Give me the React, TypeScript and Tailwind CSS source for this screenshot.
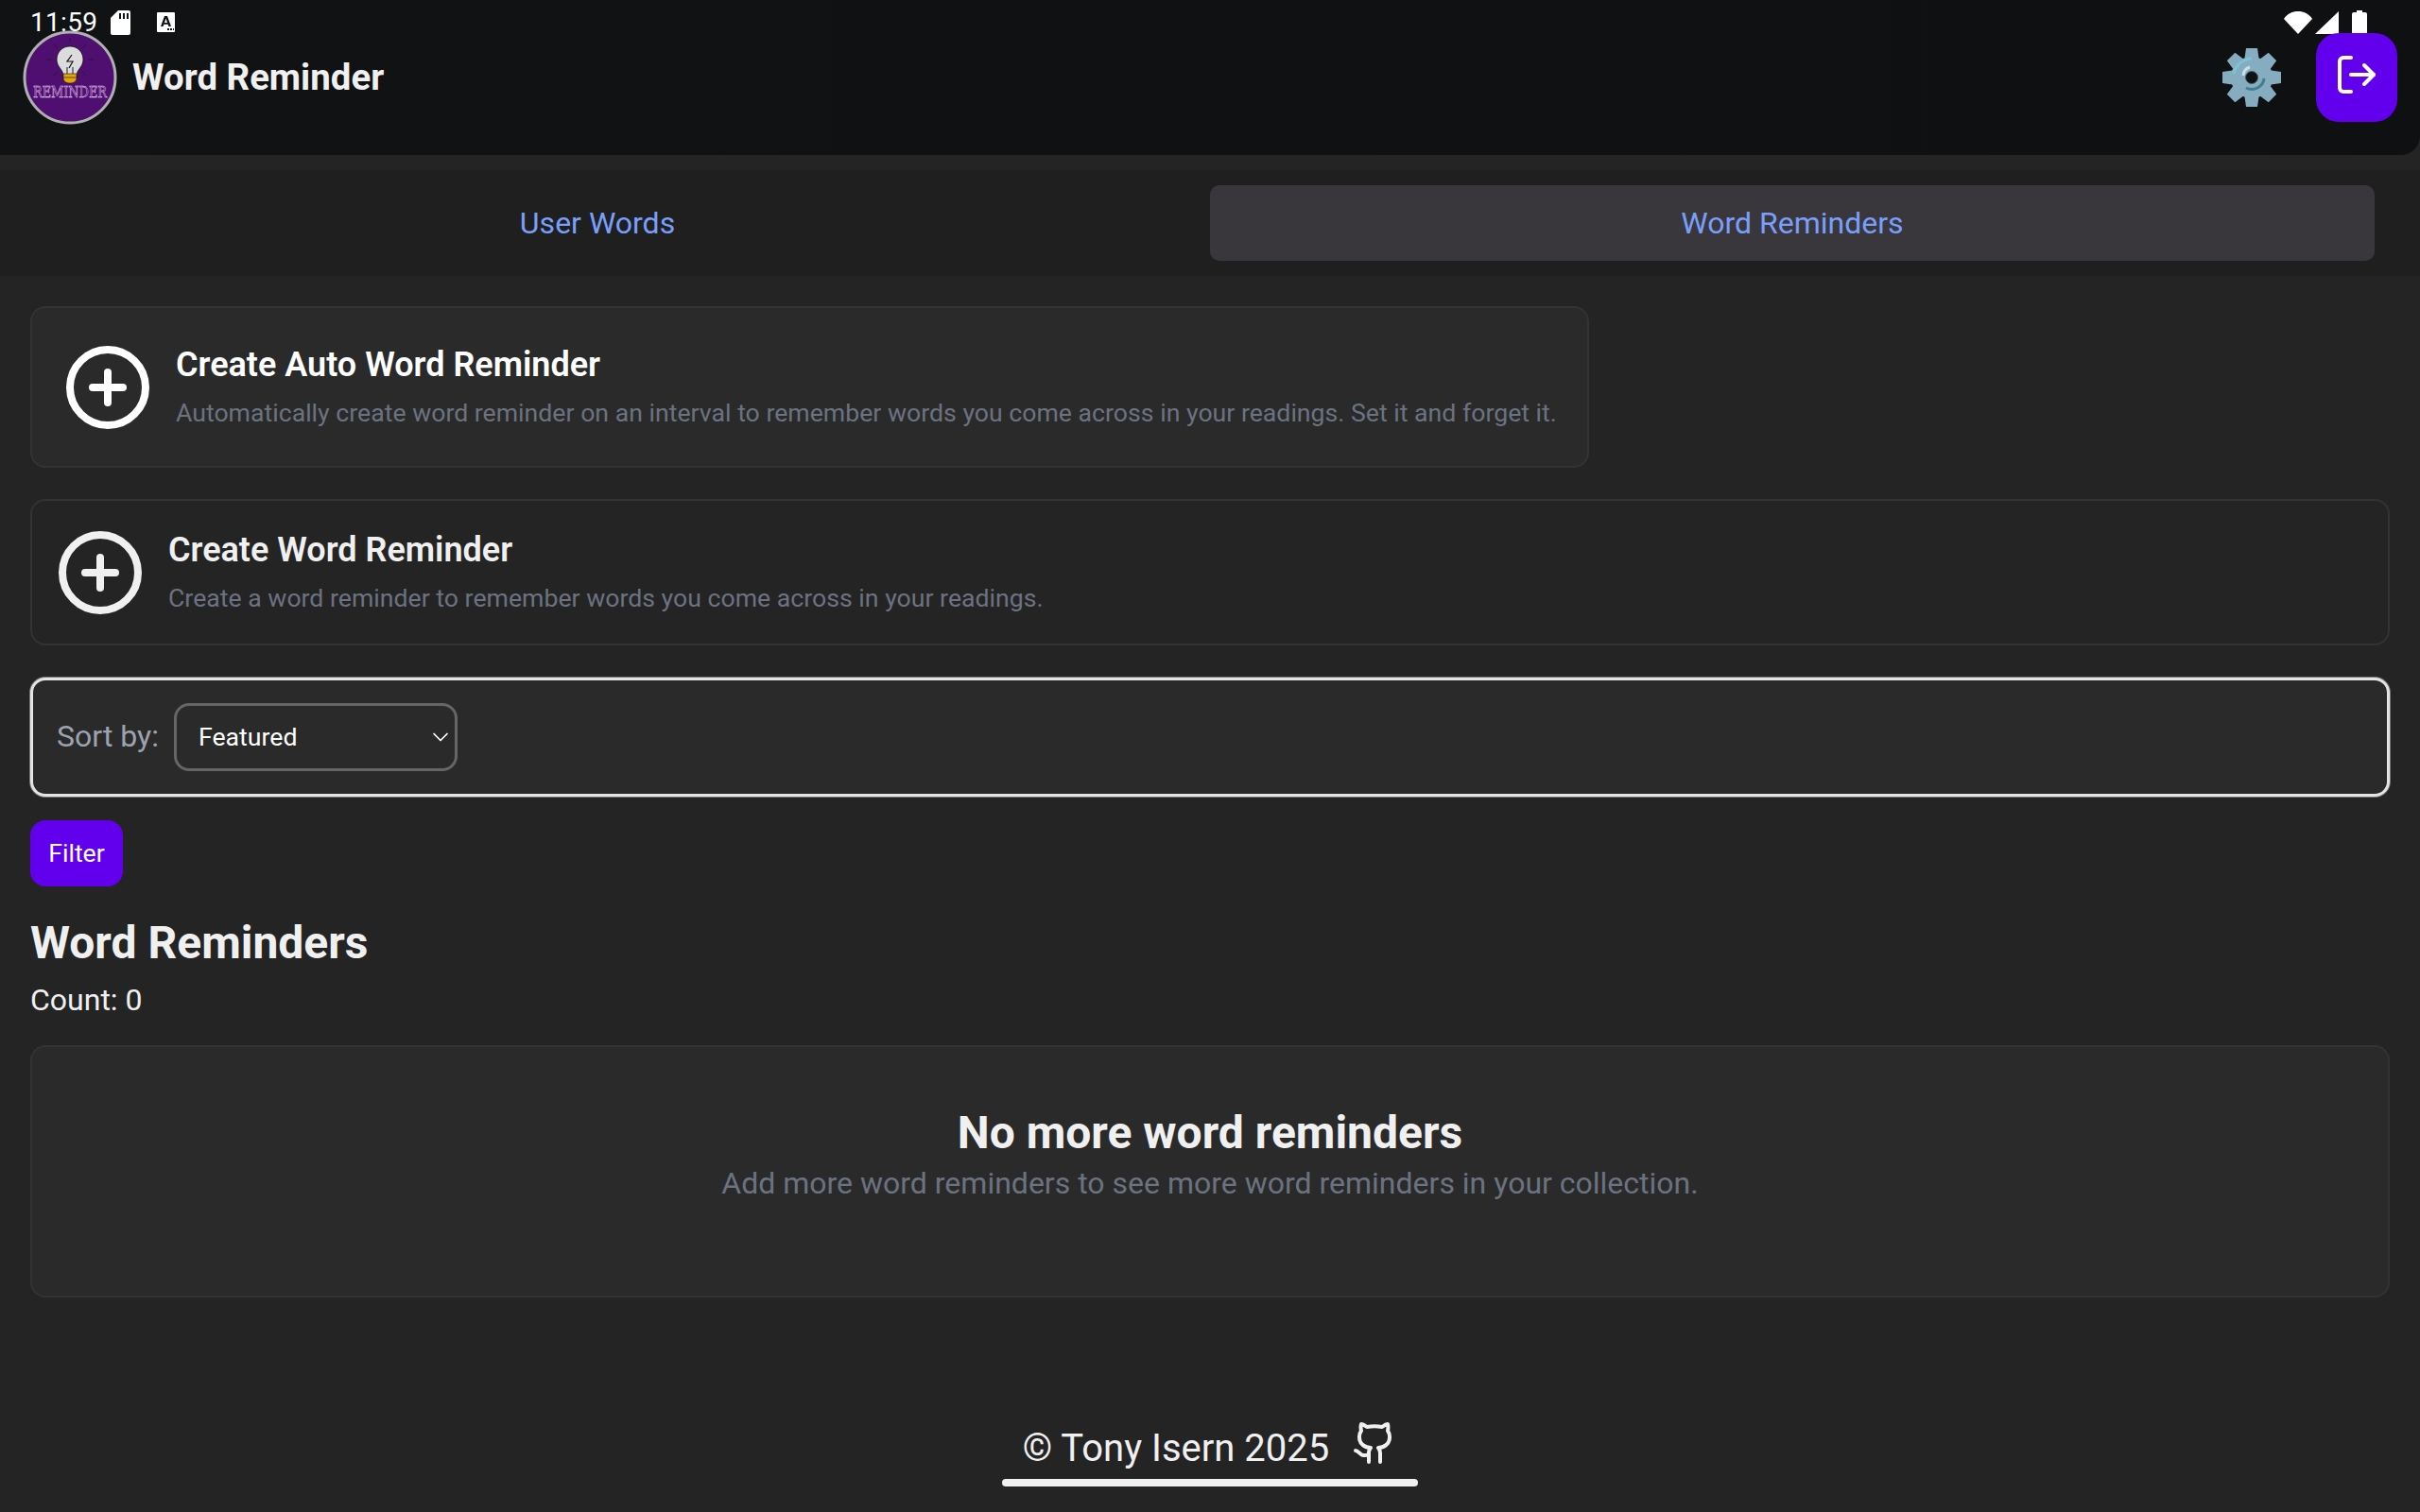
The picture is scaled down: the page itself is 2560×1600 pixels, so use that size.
import { CirclePlus, Github, LogOut, ChevronDown } from "lucide-react";

const font = "font-['Roboto',sans-serif]";

function StatusBar() {
  return (
    <div className="absolute inset-x-0 top-0 h-[40px] text-white">
      <span className="absolute left-[32px] top-[4px] text-[28px] leading-[40px] tracking-[0.3px]">11:59</span>
      <svg className="absolute left-[117px] top-[11px]" width="21" height="26" viewBox="0 0 21 26">
        <path fill="#fff" d="M8 0h11a2 2 0 0 1 2 2v22a2 2 0 0 1-2 2H2a2 2 0 0 1-2-2V8z" />
        <path fill="#111214" d="M9 3h2v6H9zM13 3h2v6h-2zM17 3h2v6h-2z" />
      </svg>
      <svg className="absolute left-[166px] top-[13px]" width="19" height="21" viewBox="0 0 19 21">
        <path fill="#fff" d="M1 0h17a1 1 0 0 1 1 1v19a1 1 0 0 1-1 1H1a1 1 0 0 1-1-1V1a1 1 0 0 1 1-1z" />
        <path fill="#111214" d="M8 4h3l4 11h-2.600l-.7-2.200H7.300L6.600 15H4zM8 11h3L9.500 6.500zM11 17h2v2h-2zM14 17h2v2h-2zM17 17h1v2h-1z" />
      </svg>
      <svg className="absolute left-[2416px] top-[11px]" width="30" height="25" viewBox="0 0 30 25">
        <path fill="#fff" d="M15 25 0 9C3.500 3.500 9 1 15 1s11.500 2.500 15 8z" />
      </svg>
      <svg className="absolute left-[2449px] top-[12px]" width="25" height="24" viewBox="0 0 25 24">
        <path fill="#fff" d="M25 0v24H0z" />
      </svg>
      <svg className="absolute left-[2488px] top-[11px]" width="16" height="26" viewBox="0 0 16 26">
        <path fill="#fff" d="M5 0h6v2h3a2 2 0 0 1 2 2v20a2 2 0 0 1-2 2H2a2 2 0 0 1-2-2V4a2 2 0 0 1 2-2h3z" />
      </svg>
    </div>
  );
}

function LogoBadge() {
  return (
    <svg width="100" height="100" viewBox="0 0 100 100" className="shrink-0">
      <circle cx="50" cy="50" r="48" fill="#4e0f70" stroke="#b0b0b0" strokeWidth="3" />
      <g stroke="#1a1a1a" strokeWidth="0.8">
        <path d="M50 8v5M33 15l4 4M67 15l-4 4M25 31h6M69 31h6M33 48l4-4M67 48l-4-4" />
      </g>
      <path
        d="M50 17c-8 0-14 6-14 14 0 6 4 9 6 13l1 4h14l1-4c2-4 6-7 6-13 0-8-6-14-14-14z"
        fill="#dcdcdc"
        stroke="#111"
        strokeWidth="0.8"
      />
      <path d="M52 26l-5 7h6l-4 7" fill="none" stroke="#111" strokeWidth="1.2" />
      <path d="M47 39v10M53 39v10" stroke="#555" strokeWidth="1.4" />
      <path d="M43 46h14v5c0 3-3 5-7 5s-7-2-7-5z" fill="#e2a60a" stroke="#111" strokeWidth="0.6" />
      <path d="M43 50h14" stroke="#111" strokeWidth="0.6" />
      <text
        x="50"
        y="71"
        textAnchor="middle"
        fontSize="17"
        fontFamily="'DejaVu Serif', serif"
        fill="#4e0f70"
        stroke="#efdcf6"
        strokeWidth="0.5"
        textLength="78"
        lengthAdjust="spacingAndGlyphs"
      >
        REMINDER
      </text>
    </svg>
  );
}

function GearEmoji() {
  const teeth = [0, 45, 90, 135, 180, 225, 270, 315];
  return (
    <svg width="64" height="64" viewBox="0 0 64 64" className="shrink-0">
      {teeth.map((deg) => (
        <path key={deg} d="M26 1h12l2 14H24z" fill="#86adbf" transform={`rotate(${deg} 32 32)`} />
      ))}
      <circle cx="32" cy="32" r="22" fill="#86adbf" />
      <path d="M13 28A20 20 0 0 1 32 12" fill="none" stroke="#7cc3d4" strokeWidth="3" />
      <path d="M23 30A10 10 0 0 1 30 21" fill="none" stroke="#c6e0e8" strokeWidth="3" />
      <path d="M26 43A13 13 0 0 0 45 33" fill="none" stroke="#3f7f90" strokeWidth="3" />
      <circle cx="32" cy="32" r="6.500" fill="#0f1113" stroke="#3c5c68" strokeWidth="1" />
    </svg>
  );
}

function Header() {
  return (
    <header className="relative flex h-[164px] items-start justify-between rounded-br-[20px] bg-gradient-to-r from-[#111214] to-[#0e1012]">
      <StatusBar />
      <div className="flex items-center gap-[16px] pl-[24px] pt-[32px]">
        <LogoBadge />
        <h1 className="text-[38.4px] font-bold leading-[60px] text-[#f0f0f0]">Word Reminder</h1>
      </div>
      <div className="relative flex items-center gap-[36px] pr-[24px] pt-[35px]">
        <GearEmoji />
        <button type="button" className="flex h-[94px] w-[86px] items-center justify-center rounded-[24px] bg-[#6200ee] pb-[6px] text-white">
          <LogOut size={48} strokeWidth={2} />
        </button>
      </div>
    </header>
  );
}

function Tabs() {
  return (
    <div className="mt-[16px] flex h-[112px] items-center gap-[32px] bg-[#1f1f1f] pl-[16px] pr-[48px]">
      <button type="button" className="flex h-[80px] flex-1 items-center justify-center rounded-[10px] text-[32px] text-[#7a9ffa]">
        User Words
      </button>
      <button type="button" className="flex h-[80px] flex-1 items-center justify-center rounded-[10px] bg-[#39373c] text-[32px] text-[#7a9ffa]">
        Word Reminders
      </button>
    </div>
  );
}

function CreateCard({ title, text, auto }: { title: string; text: string; auto?: boolean }) {
  return (
    <div
      className={
        auto
          ? "flex w-fit items-center gap-[24px] rounded-[16px] border-2 border-[#333333] bg-[#2a2a2a] p-[32px] text-white"
          : "flex items-center gap-[24px] rounded-[16px] border-2 border-[#333333] p-[24px] text-[#f0f0f0]"
      }
    >
      <CirclePlus size={96} strokeWidth={2} className="shrink-0" />
      <div className="pb-[3px]">
        <h3 className="text-[36px] font-semibold leading-[56px]">{title}</h3>
        <p className="mt-[3px] text-[26.67px] leading-[41px] text-[#6b7280]">{text}</p>
      </div>
    </div>
  );
}

function SortBar() {
  return (
    <div className="mt-[34px] flex h-[126px] items-center gap-[16px] rounded-[16px] border-[3px] border-[#e4e4e4] bg-[#2a2a2a] pl-[25px] shadow-[0_0_0_1px_#777777]">
      <span className="pb-[3px] text-[32px] text-[#9ca3af]">Sort by:</span>
      <div className="relative flex h-[72px] w-[300px] items-center rounded-[16px] border-[3px] border-[#666666] pl-[23px] text-[26.67px] text-white">
        Featured
        <ChevronDown size={28} strokeWidth={1.500} className="absolute right-[1px] top-[19px]" />
      </div>
    </div>
  );
}

export default function App() {
  return (
    <div className={`relative flex h-[1600px] flex-col overflow-hidden bg-[#242424] ${font}`}>
      <Header />
      <Tabs />
      <main className="flex flex-col px-[32px] pt-[32px]">
        <CreateCard
          auto
          title="Create Auto Word Reminder"
          text="Automatically create word reminder on an interval to remember words you come across in your readings. Set it and forget it."
        />
        <div className="mt-[33px]">
          <CreateCard title="Create Word Reminder" text="Create a word reminder to remember words you come across in your readings." />
        </div>
        <SortBar />
        <button type="button" className="mt-[25px] h-[70px] w-[98px] rounded-[16px] bg-[#6200ee] text-[26.67px] text-white">
          Filter
        </button>
        <h2 className="mt-[24px] text-[48px] font-bold leading-[72px] text-[#f0f0f0]">Word Reminders</h2>
        <p className="text-[32px] leading-[48px] text-[#f0f0f0]">Count: 0</p>
        <section className="mt-[24px] flex h-[267px] flex-col items-center rounded-[16px] border-2 border-[#333333] bg-[#2a2a2a] pt-[60px]">
          <h3 className="text-[48px] font-bold leading-[62px] text-[#f0f0f0]">No more word reminders</h3>
          <p className="text-[32px] leading-[44px] text-[#6b7280]">Add more word reminders to see more word reminders in your collection.</p>
        </section>
      </main>
      <footer className="mt-[130px] flex flex-col items-center">
        <div className="flex items-center gap-[24px] text-[40px] leading-[60px] text-[#f0f0f0]">
          <span>© Tony Isern 2025</span>
          <Github size={48} strokeWidth={2} className="mb-[12px]" />
        </div>
        <div className="mt-[2px] h-[8px] w-[440px] rounded-full bg-[#f0f0f0]" />
      </footer>
    </div>
  );
}
